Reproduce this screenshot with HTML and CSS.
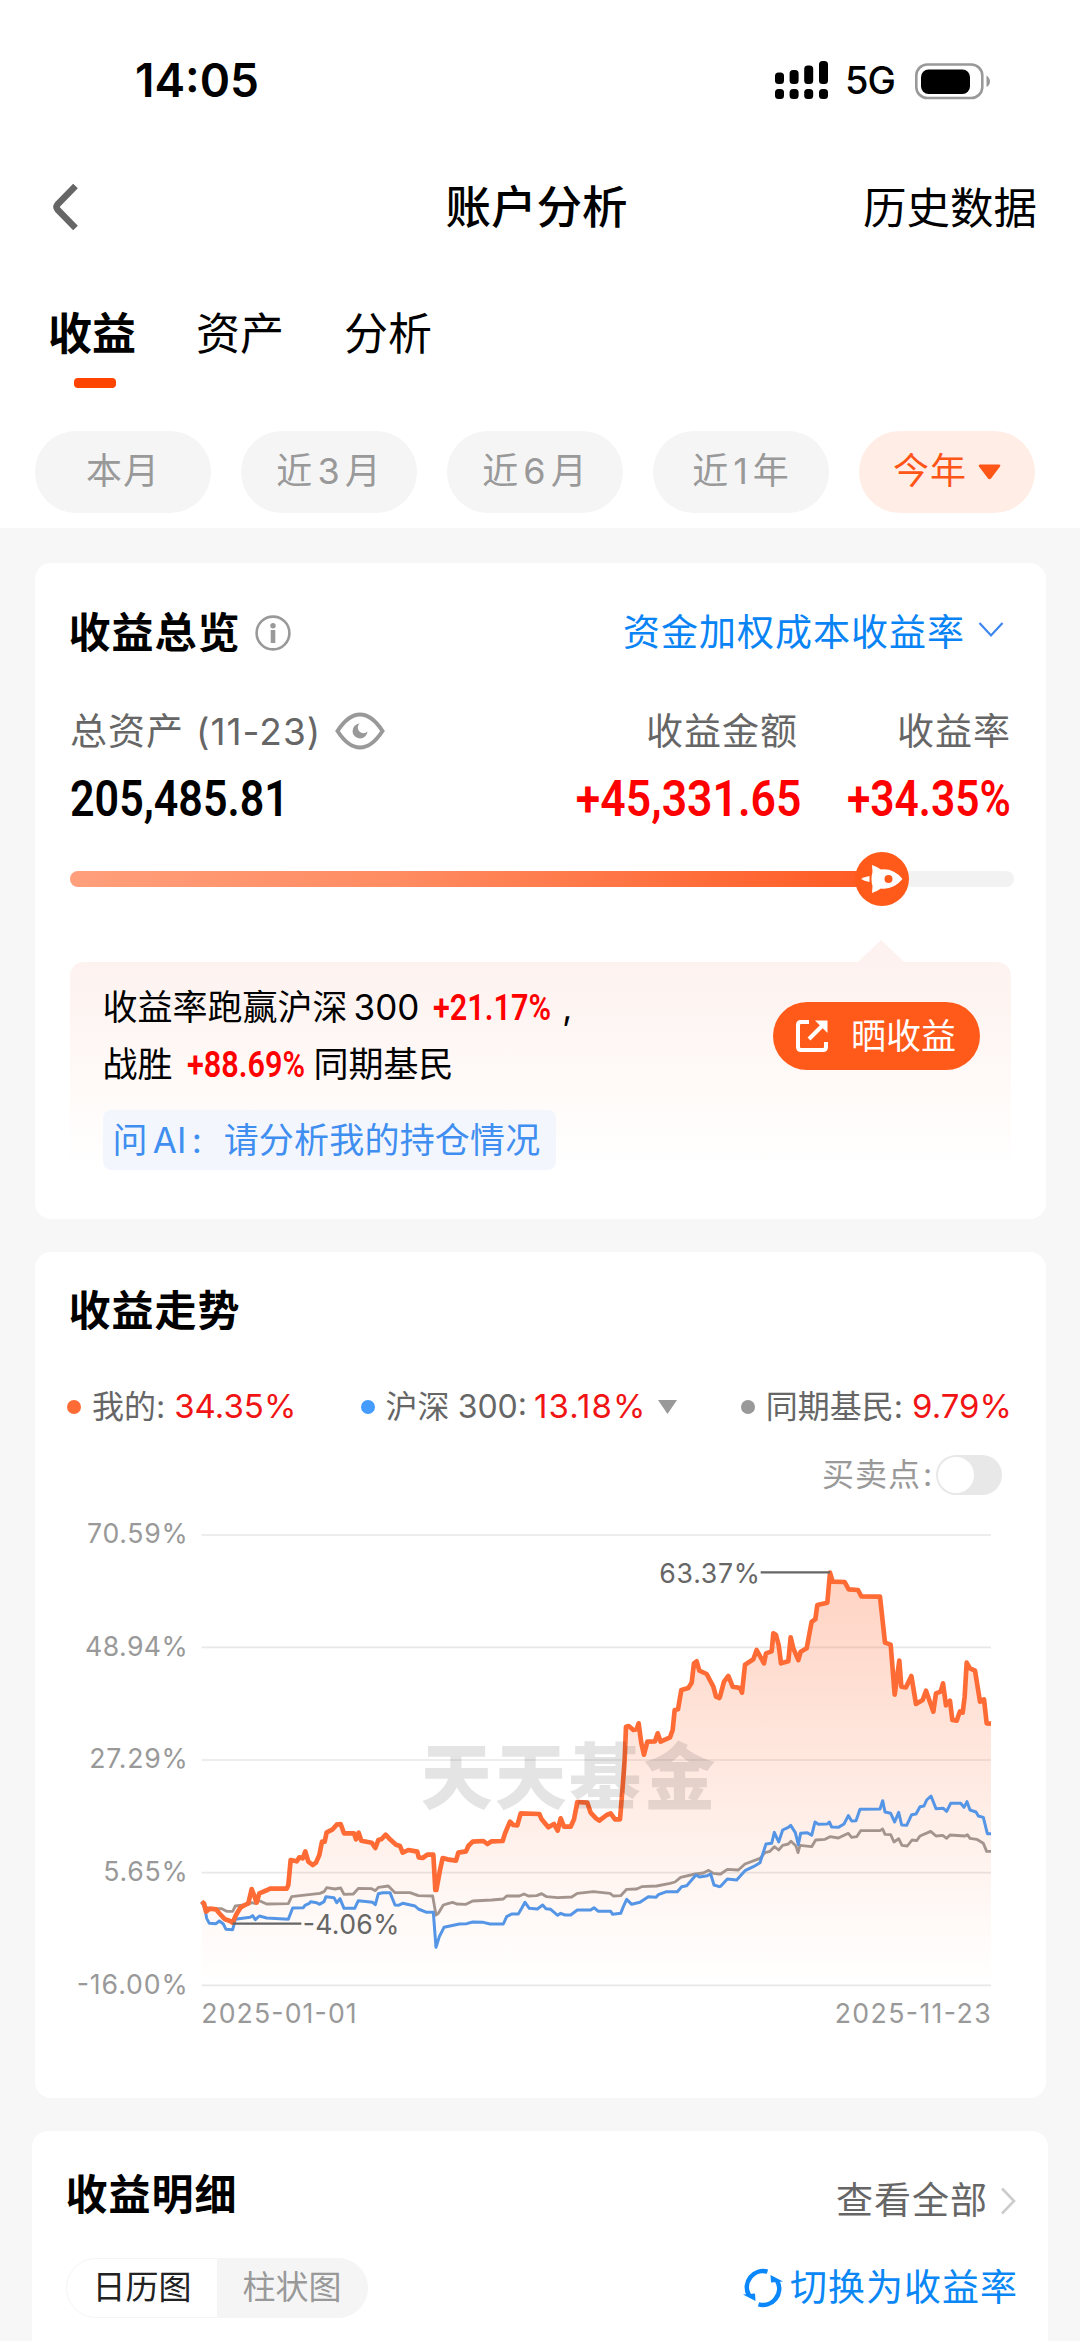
FILE: index.html
```html
<!DOCTYPE html>
<html lang="zh-CN">
<head>
<meta charset="utf-8">
<title>账户分析</title>
<link rel="stylesheet" href="styles.css">
</head>
<body>
<header class="top">
  <div class="status">
    <span class="time">14:05</span>
    <div class="status-icons">
      <svg class="signal" width="55" height="40" viewBox="0 0 55 40">
        <rect x="0" y="12.500" width="9" height="11.500" rx="3.500"/><rect x="14.600" y="10" width="9" height="14" rx="3.500"/><rect x="29.200" y="5.500" width="9" height="18.500" rx="3.500"/><rect x="44" y="1" width="9" height="23" rx="3.500"/>
        <rect x="0" y="29" width="9" height="10" rx="3.500"/><rect x="14.600" y="29" width="9" height="10" rx="3.500"/><rect x="29.200" y="29" width="9" height="10" rx="3.500"/><rect x="44" y="29" width="9" height="10" rx="3.500"/>
      </svg>
      <span class="net">5G</span>
      <svg class="battery" width="76" height="38" viewBox="0 0 76 38">
        <rect x="1.300" y="2.500" width="66" height="33.500" rx="11" fill="none" stroke="#999" stroke-width="2.600"/>
        <rect x="6" y="7.500" width="49" height="24.500" rx="7.500"/>
        <path d="M71.500 13.500Q75 16 75 19.500T71.500 25Z" fill="#999"/>
      </svg>
    </div>
  </div>
  <nav class="nav">
    <svg class="back" width="30" height="50" viewBox="0 0 30 50"><path d="M25.500 4 7.500 22.500Q5.500 25 7.500 27.500L25.500 46" fill="none" stroke="#666" stroke-width="6.500"/></svg>
    <h1>账户分析</h1>
    <a class="history">历史数据</a>
  </nav>
  <div class="tabs">
    <span class="tab tab-on">收益</span><span class="tab">资产</span><span class="tab">分析</span>
  </div>
  <div class="ranges">
    <span class="pill">本月</span><span class="pill">近<i>3</i>月</span><span class="pill">近<i>6</i>月</span><span class="pill">近<i>1</i>年</span>
    <span class="pill pill-on">今年<svg width="23" height="16" viewBox="0 0 23 16"><path d="M2 .5H21Q23 .5 22 2.500L13 14.500Q11.500 16 10 14.500L1 2.500Q0 .5 2 .5Z" fill="#ff5516"/></svg></span>
  </div>
</header>

<main>
  <section class="card overview">
    <div class="head">
      <h2>收益总览</h2>
      <svg class="info" width="36" height="36" viewBox="0 0 36 36"><circle cx="18" cy="18" r="16.400" fill="none" stroke="#999" stroke-width="2.600"/><circle cx="18" cy="10.800" r="2.700" fill="#999"/><path d="M18 15V28" stroke="#999" stroke-width="4.600"/></svg>
      <a class="method">资金加权成本收益率</a>
      <svg class="down" width="26" height="18" viewBox="0 0 26 18"><path d="M1.500 2 13 14.500 24.500 2" fill="none" stroke="#3d86f0" stroke-width="2.200"/></svg>
    </div>
    <div class="stats">
      <div class="stat"><div class="label">总资产<span class="date">(11-23)</span>
        <svg class="eye" width="50" height="38" viewBox="0 0 50 38"><path d="M2.500 19C9 9 17 2.500 25 2.500S41 9 47.500 19C41 29 33 35.500 25 35.500S9 29 2.500 19Z" fill="none" stroke="#999" stroke-width="4"/><path d="M24.500 11.500A7.500 7.500 0 1 0 32.500 19.500 5.500 5.500 0 0 1 24.500 11.500Z" fill="#999"/></svg></div>
        <div class="value"><b class="num n-total">205,485.81</b></div></div>
      <div class="stat right"><div class="label">收益金额</div><div class="value red"><b class="num n-gain">+45,331.65</b></div></div>
      <div class="stat right"><div class="label">收益率</div><div class="value red"><b class="num n-rate">+34.35%</b></div></div>
    </div>
    <div class="progress"><div class="fill" style="width:812px"></div>
      <svg class="rocket" width="54" height="54" viewBox="0 0 54 54"><circle cx="27" cy="27" r="27" fill="#ff5a1a"/><path d="M17 13Q22.500 15 26 17.500 38.500 16 47.500 27 38.500 38 26 36.500 22.500 39 17 41L17.500 34Q15.500 27 17.500 20Z" fill="#fff"/><path d="M14.500 24Q9 25 6 27 9 29 14.500 30Z" fill="#fff"/><circle cx="33.500" cy="27" r="4" fill="#ff5a1a"/></svg>
    </div>
    <div class="tip">
      <div class="tip-text">
        <p>收益率跑赢沪深<span class="d300">300</span><b class="num pct">+21.17%</b><span class="comma">,</span></p>
        <p>战胜<b class="num pct beat">+88.69%</b>同期基民</p>
        <a class="ask">问<span class="ai">AI</span><span class="colon">:</span>请分析我的持仓情况</a>
      </div>
      <button class="share"><svg width="34" height="34" viewBox="0 0 34 34" fill="none" stroke="#fff" stroke-width="4"><path d="M14 3H6Q3 3 3 6V28Q3 31 6 31H28Q31 31 31 28V23"/><path d="M14 20 29 5"/><path d="M20 1.500H32.500V14Z" fill="#fff" stroke="none"/></svg>晒收益</button>
    </div>
  </section>

  <section class="card trend">
    <div class="head"><h2>收益走势</h2></div>
    <div class="legend">
      <span class="item"><i class="dot orange"></i>我的:<em class="v1">34.35%</em></span>
      <span class="item"><i class="dot blue"></i>沪深<span class="idx">300:</span><em class="v2">13.18%</em><svg class="caret" width="19" height="14" viewBox="0 0 19 14"><path d="M0 0H19L9.500 14Z" fill="#999"/></svg></span>
      <span class="item"><i class="dot gray"></i>同期基民:<em class="v3">9.79%</em></span>
    </div>
    <div class="switch-row">买卖点<span class="sw-colon">:</span><span class="switch"></span></div>
    <svg class="chart" width="1011" height="540" viewBox="-435 -60 3033 1620">
      <defs><linearGradient id="area" gradientUnits="userSpaceOnUse" x1="0" y1="158" x2="0" y2="1395"><stop offset="0" stop-color="#ff6b35" stop-opacity=".3"/><stop offset=".8" stop-color="#ff6b35" stop-opacity=".05"/><stop offset="1" stop-color="#ff6b35" stop-opacity="0"/></linearGradient></defs>
      <path class="grid" d="M65 45H2433M65 382H2433M65 720H2433M65 1058H2433M65 1396H2433"/>
      <g class="axis">
        <text x="23" y="70" text-anchor="end" textLength="302">70.59%</text>
        <text x="23" y="407" text-anchor="end" textLength="308">48.94%</text>
        <text x="23" y="745" text-anchor="end" textLength="295">27.29%</text>
        <text x="23" y="1083" text-anchor="end" textLength="253">5.65%</text>
        <text x="23" y="1421" text-anchor="end" textLength="333">-16.00%</text>
        <text x="64" y="1510" textLength="466">2025-01-01</text>
        <text x="2432" y="1510" text-anchor="end" textLength="468">2025-11-23</text>
      </g>
      <path id="fill" fill="url(#area)"/>
      <polyline id="peers" class="line" stroke="#a3948e" stroke-width="8.500"/>
      <polyline id="index" class="line" stroke="#5595e6" stroke-width="9"/>
      <polyline id="mine" class="line" stroke="#ff6b35" stroke-width="14"/>
      <path class="lead" d="M158 1211H364M1742 157H1950"/>
      <g class="mark"><text x="368" y="1241" textLength="290">-4.06%</text><text x="1438" y="188" textLength="302">63.37%</text></g>
      <text class="brand" x="722" y="848" textLength="884">天天基金</text>
    </svg>
  </section>

  <section class="card detail">
    <div class="head"><h2>收益明细</h2><a class="all">查看全部</a><svg class="next" width="16" height="28" viewBox="0 0 16 28"><path d="M2 1.500 14 14 2 26.500" fill="none" stroke="#ccc" stroke-width="2.600"/></svg></div>
    <div class="detail-row">
      <div class="seg"><span class="seg-on">日历图</span><span>柱状图</span></div>
      <a class="toggle"><svg width="40" height="40" viewBox="0 0 40 40"><g fill="none" stroke="#0a87fa" stroke-width="4.600"><path d="M24.500 3.600A16.300 16.300 0 0 0 5.800 27"/><path d="M15.500 36.400A16.300 16.300 0 0 0 34.200 13"/></g><path d="M27.500 7 40 13.500 28 14.500ZM12.500 33 0 26.500 12 25.500Z" fill="#0a87fa"/></svg>切换为收益率</a>
    </div>
  </section>
</main>
<script src="chart.js"></script>
</body>
</html>
```
FILE: styles.css
```css
* { box-sizing: border-box; margin: 0; padding: 0; }
body { width: 1080px; height: 2341px; overflow: hidden; background: #f7f7f7; color: #000; font-family: Inter, "Noto Sans CJK SC", sans-serif; line-height: 1.2; }
svg { display: block; flex: none; }
i, em { font-style: normal; }

.top { height: 528px; background: #fff; }
.status { display: flex; justify-content: space-between; align-items: center; height: 162px; padding: 0 89px 0 135px; }
.time { font-size: 46px; font-weight: 600; }
.status-icons { display: flex; align-items: center; }
.signal { margin-top: -2px; }
.net { width: 52px; margin-left: 15px; font-size: 38px; font-weight: 500; letter-spacing: -1px; }
.battery { margin-left: 18px; }
.nav { display: grid; grid-template-columns: 1fr auto 1fr; align-items: center; height: 88px; padding: 0 43px 0 50px; line-height: 88px; }
.nav h1 { margin: 2px 8px 0 -6px; font-size: 45.500px; font-weight: 500; }
.history { padding-top: 2px; font-size: 43.500px; justify-self: end; }
.tabs { display: flex; gap: 60px; height: 181px; padding-left: 48px; font-size: 44px; line-height: 169px; }
.tab-on { position: relative; font-weight: 700; }
.tab-on::after { content: ""; position: absolute; left: 26px; top: 128px; width: 42px; height: 10px; border-radius: 4px; background: #ff4400; }
.ranges { display: flex; gap: 30px; padding-left: 35px; }
.pill { display: flex; justify-content: center; align-items: center; width: 176px; height: 82px; border-radius: 41px; background: #f5f5f5; color: #999; font-size: 36px; letter-spacing: 1px; }
.pill i { margin: 0 4px; }
.pill-on { gap: 11px; background: #ffede6; color: #ff5516; }

main { padding-top: 35px; }
.card { margin: 0 34px 33px 35px; border-radius: 16px; background: #fff; }
h2 { margin-left: -1.500px; font-size: 42px; font-weight: 700; letter-spacing: 1px; }
.head { display: flex; align-items: center; line-height: 62px; }
.overview { height: 656px; padding: 0 35px; }
.overview .head { height: 140px; }
.info { margin-left: 14px; }
.method { margin-left: auto; color: #0a84f5; font-size: 37px; letter-spacing: 1px; }
.down { margin: -7px 7px 0 13px; }
.stats { display: grid; grid-template-columns: 1fr 250px 213px; }
.right { text-align: right; }
.label { display: flex; align-items: center; height: 58px; color: #666; font-size: 37px; letter-spacing: 1px; white-space: nowrap; }
.right .label { justify-content: flex-end; }
.date { margin-left: 12px; letter-spacing: 1px; }
.eye { margin: -2px 0 0 14px; }
.value { height: 74px; line-height: 77px; white-space: nowrap; }
.red { color: #f00; }
.num { display: inline-block; font-family: Roboto, sans-serif; font-size: 50px; font-weight: 600; transform-origin: 0 50%; transform: scaleX(.86); }
.right .num { transform-origin: 100% 50%; }
.right .n-gain { margin-right: 2px; transform: scaleX(.89); }
.right .n-rate { transform: scaleX(.85); }
.progress { position: relative; height: 16px; margin: 36px -3px 0 0; border-radius: 8px; background: #f2f2f2; }
.fill { height: 16px; border-radius: 8px; background: linear-gradient(90deg, #ff9f7c, #ff8c62 40%, #ff5a22); }
.rocket { position: absolute; left: 785px; top: -19px; }
.tip { position: relative; display: flex; justify-content: space-between; height: 208px; margin-top: 75px; padding: 17px 31px 0 34px; border-radius: 14px; background: linear-gradient(#fdf2ef, #fffaf8 60%, #fff); }
.tip::before { content: ""; position: absolute; left: 788px; top: -22px; border: solid transparent; border-width: 0 23px 22px; border-bottom-color: #fdf2ef; }
.tip-text { margin-left: -1.500px; }
.tip p { height: 57px; font-size: 35px; line-height: 57px; white-space: nowrap; }
.d300 { margin-left: 6px; }
.tip .pct { width: 117px; margin-left: 14px; color: #f00; font-size: 36px; transform: scaleX(.85); }
.tip .beat { margin-right: 10px; }
.comma { margin-left: 12px; }
.ask { display: flex; align-items: center; width: 453px; height: 60px; margin-top: 17px; padding-left: 10px; border-radius: 8px; background: #f3f7fd; color: #3f8ef0; font-size: 35px; letter-spacing: .2px; white-space: nowrap; }
.ai { margin-left: 5px; }
.colon { width: 33px; margin-left: 4px; padding-left: 1px; }
.share { display: flex; align-items: center; gap: 22px; width: 207px; height: 68px; margin-top: 23px; padding-left: 22px; border: 0; border-radius: 34px; background: #ff5a1a; color: #fff; font: 35px/1.2 Inter, "Noto Sans CJK SC", sans-serif; white-space: nowrap; }

.trend { height: 846px; }
.trend .head { height: 118px; padding-left: 35px; }
.legend { display: flex; justify-content: space-between; align-items: center; height: 74px; padding: 0 34px 0 32px; color: #666; font-size: 32px; }
.item { display: flex; align-items: center; white-space: nowrap; }
.dot { width: 14px; height: 14px; margin-right: 11px; border-radius: 50%; }
.orange { background: #ff6b35; }
.blue { background: #469bff; }
.gray { background: #999; }
.legend em { margin-left: 9px; color: #f01414; font-size: 33px; }
.legend .v2 { margin-left: 7px; letter-spacing: 1.100px; }
.idx { margin-left: 8px; }
.caret { margin-left: 11px; }
.switch-row { display: flex; justify-content: flex-end; align-items: center; height: 62px; padding-right: 44px; color: #999; font-size: 32px; letter-spacing: 1px; }
.sw-colon { width: 13px; margin-left: 2px; }
.switch { width: 66px; height: 40px; padding: 2px; border-radius: 20px; background: #e8e8e8; }
.switch::before { content: ""; display: block; width: 36px; height: 36px; border-radius: 50%; background: #fff; }
.chart { margin-top: -6px; font-family: Inter, "Noto Sans CJK SC", sans-serif; }
.grid { stroke: #e8e8e8; stroke-width: 5; }
.axis { fill: #999; font-size: 80px; }
.line { fill: none; stroke-linejoin: round; }
.lead { stroke: #666; stroke-width: 7; }
.mark { fill: #666; font-size: 80px; }
.brand { font-family: "Noto Sans CJK SC", sans-serif; font-size: 215px; font-weight: 900; opacity: .1; }

.detail { height: 300px; margin: 0 32px; padding: 0 32px 0 35px; }
.detail .head { height: 127px; }
.all { margin: 13px 0 0 auto; color: #666; font-size: 37px; letter-spacing: 1px; }
.next { margin: 13px 0 0 12px; }
.detail-row { display: flex; justify-content: space-between; align-items: center; height: 60px; }
.seg { display: flex; width: 302px; height: 60px; margin-left: -1px; border: 1.500px solid #f5f5f5; border-radius: 30px; overflow: hidden; background: #f5f5f5; color: #999; font-size: 33px; line-height: 57px; text-align: center; }
.seg span { flex: 1; }
.seg .seg-on { background: #fff; color: #222; }
.toggle { display: flex; align-items: center; gap: 7px; margin-right: -2px; color: #0a87f5; font-size: 37px; letter-spacing: 1px; white-space: nowrap; }
```
FILE: chart.js
```js
// Each series is stored in three stretches: [x offset, "x,y x,y ..."].
const series = {
  mine: [
    [0, "65,1145 72,1150 78,1175 90,1166 108,1168 120,1182 135,1198 150,1203 158,1208 168,1185 182,1162 195,1155 205,1150 215,1107 222,1125 230,1148 238,1120 262,1110 270,1106 320,1106 325,1095 332,1020 350,1024 358,1012 368,1015 376,994 385,1025 398,1035 408,1028 418,1005 426,965 434,965 440,937 458,928 470,914 482,912 492,940 522,940 528,958 536,938 544,962 575,968 586,984 595,960 605,957 617,944 630,958 648,974 660,978 668,998 685,990 712,995 716,1012 728,1014 742,1004 760,1004 766,1110 769,1110 780,1050"],
    [780, "8,1014 22,1018 48,1022 55,998 78,994 85,978 98,965 130,963 142,972 155,964 188,963 195,940 210,905 220,915 232,916 242,880 298,882 305,898 325,922 342,912 353,932 362,895 372,920 392,920 402,898 412,846 442,848 452,878 468,895 478,902 500,885 512,880 525,898 540,898 548,800 554,720 558,620 566,618 580,630 590,628 596,610 604,670 612,704 622,665 645,664 653,640 662,665 690,652 698,630 704,570 714,568 724,510 745,504 755,488 762,430 770,424 778,452 800,462 820,500 828,530 838,534"],
    [1620, "0,530 12,485 25,468 38,500 60,504 66,518 75,434 100,418 110,390 132,430 138,400 155,394 160,340 168,345 176,375 183,430 205,424 212,352 220,385 235,420 242,395 260,385 275,305 286,298 292,255 322,248 330,158 338,185 374,186 386,208 414,210 424,229 480,230 495,368 512,374 524,524 538,422 544,500 558,502 574,468 588,552 608,540 618,512 640,575 648,520 662,515 669,490 678,556 690,542 697,600 710,602 720,574 728,578 734,530 740,428 750,445 765,452 780,545 792,538 800,610 813,611"]
  ],
  peers: [
    [0, "65,1145 72,1160 90,1166 125,1166 140,1174 158,1174 166,1158 205,1153 215,1148 225,1150 238,1142 260,1152 325,1151 335,1130 360,1127 420,1120 432,1115 440,1103 465,1107 482,1104 492,1123 520,1122 535,1105 575,1106 586,1112 595,1102 625,1098 645,1118 690,1118 715,1127 758,1128 768,1185 775,1180"],
    [780, "10,1155 26,1150 38,1147 50,1152 78,1153 98,1143 155,1140 190,1137 200,1128 238,1128 252,1122 265,1128 290,1127 305,1121 320,1130 353,1133 395,1131 412,1120 460,1115 510,1120 520,1128 542,1127 560,1108 590,1107 605,1100 650,1098 690,1090 705,1086 722,1072 765,1062 790,1059 806,1051 820,1060 838,1062"],
    [1620, "2,1062 22,1048 55,1050 75,1032 120,1015 135,998 150,994 163,980 176,990 188,976 205,972 213,964 228,978 234,998 240,976 275,980 287,960 315,958 330,950 355,954 385,940 395,952 410,950 422,932 480,932 488,927 495,943 512,944 522,966 536,956 546,976 562,978 576,960 590,962 600,948 632,934 648,948 668,946 680,955 690,945 735,948 742,944 750,955 770,958 790,970 800,994 813,994"]
  ],
  index: [
    [0, "65,1145 74,1160 80,1195 88,1210 108,1211 118,1203 130,1212 138,1228 158,1229 166,1198 210,1192 218,1187 226,1199 238,1188 260,1194 325,1198 338,1164 370,1163 375,1156 388,1150 392,1145 410,1148 418,1153 432,1145 438,1130 462,1133 470,1148 480,1136 492,1165 524,1165 535,1142 578,1147 586,1154 595,1121 608,1118 630,1118 645,1155 655,1156 668,1150 705,1158 715,1167 740,1177 760,1177 768,1282 778,1250"],
    [780, "12,1222 58,1212 80,1211 98,1206 130,1207 150,1212 190,1212 200,1190 215,1182 235,1182 245,1165 255,1147 268,1165 292,1167 308,1155 318,1166 332,1168 353,1186 362,1180 375,1185 392,1185 412,1170 452,1170 462,1163 475,1174 512,1174 518,1183 542,1180 550,1160 560,1138 575,1153 600,1147 625,1130 648,1132 655,1124 680,1115 712,1115 725,1100 740,1097 768,1065 778,1071 802,1067 812,1062 822,1095 838,1100"],
    [1620, "2,1099 22,1077 50,1080 75,1052 100,1040 120,1028 138,972 155,970 163,937 176,966 188,930 205,922 212,916 226,938 235,974 242,940 262,938 275,946 285,906 295,913 322,912 328,906 335,921 355,922 372,912 385,887 395,903 408,902 420,868 480,867 488,842 495,876 512,880 524,906 536,877 545,915 560,916 575,884 588,882 600,860 612,858 620,840 633,828 648,866 670,865 680,874 692,850 722,850 732,862 741,845 750,870 768,876 775,888 790,892 802,941 813,941"]
  ]
};
const BASE = 1395;
for (const [id, parts] of Object.entries(series)) {
  const points = parts.flatMap(([dx, text]) => text.split(" ").map(p => {
    const [x, y] = p.split(",").map(Number);
    return (x + dx) + "," + y;
  }));
  document.getElementById(id).setAttribute("points", points.join(" "));
  if (id === "mine") {
    document.getElementById("fill").setAttribute("d", "M65," + BASE + "L" + points.join("L") + "L2433," + BASE + "Z");
  }
}
```
